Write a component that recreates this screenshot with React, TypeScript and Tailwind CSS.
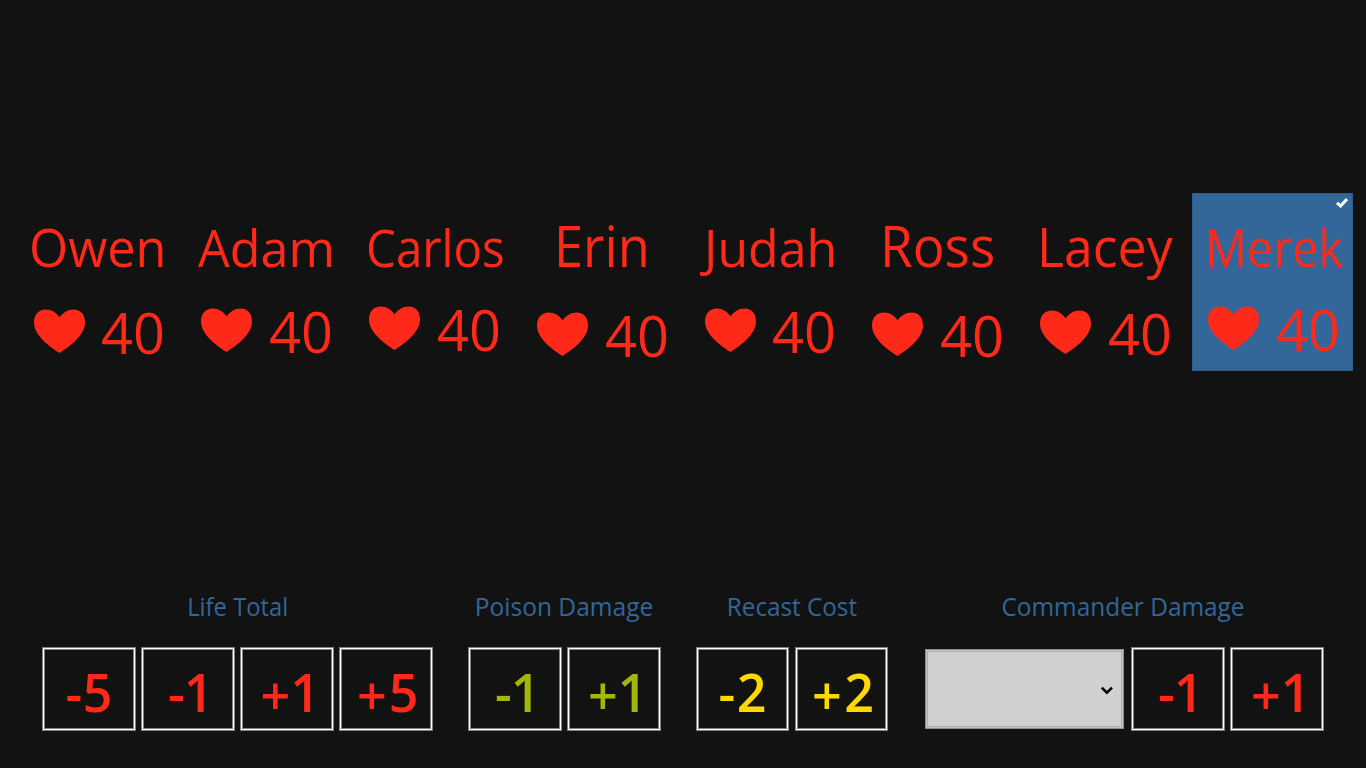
type Player = {
  name: string;
  life: number;
  nameClass: string;
  rowClass: string;
  selected?: boolean;
};

const players: Player[] = [
  { name: "Owen", life: 40, nameClass: "text-[53px] ml-[11.8px] scale-x-[0.951]", rowClass: "mt-[14px]" },
  { name: "Adam", life: 40, nameClass: "text-[52px] ml-[12.8px] scale-x-[0.966]", rowClass: "mt-[13px]" },
  { name: "Carlos", life: 40, nameClass: "text-[51px] ml-[12.4px] scale-x-[0.93]", rowClass: "mt-[11px]" },
  { name: "Erin", life: 40, nameClass: "text-[57.5px] ml-[32.6px] scale-x-[0.911]", rowClass: "mt-[17px]" },
  { name: "Judah", life: 40, nameClass: "text-[52px] ml-[15.2px] scale-x-[0.962]", rowClass: "mt-[13px]" },
  { name: "Ross", life: 40, nameClass: "text-[57.5px] ml-[23.1px] scale-x-[0.922]", rowClass: "mt-[17px]" },
  { name: "Lacey", life: 40, nameClass: "text-[54.6px] ml-[13px] scale-x-[0.948]", rowClass: "mt-[15px]" },
  { name: "Merek", life: 40, nameClass: "text-[50.4px] ml-[13.4px] scale-x-[0.926]", rowClass: "mt-[11px]", selected: true },
];

function Heart() {
  return (
    <svg viewBox="0 0 51 44" className="h-[44px] w-[51px] shrink-0 fill-[#ff291a]">
      <path d="M25.5 44 C15 37.5 0 26 0 13.5 C0 5.5 5 0.5 11.5 0.5 C18 0.5 22.5 4 25.6 8.2 C28.8 4 33.5 0.5 40 0.5 C46.5 0.5 51 5.5 51 13.5 C51 26 36 37.5 25.5 44 Z" />
    </svg>
  );
}

function PlayerTile({ player }: { player: Player }) {
  return (
    <div
      className={
        player.selected
          ? "relative h-[178px] w-[160.6px] shrink-0 bg-[#336699] shadow-[inset_0_0_0_1px_#2e5d8c]"
          : "relative h-[178px] w-[160.6px] shrink-0"
      }
    >
      <div className="h-[102px] text-[58px] leading-[104px] whitespace-nowrap">
        <span className={"inline-block origin-left leading-none " + player.nameClass}>{player.name}</span>
      </div>
      <div className={"flex h-[44px] items-end gap-[16.8px] pl-4 " + player.rowClass}>
        <Heart />
        <span className="relative top-px inline-block origin-left scale-x-[0.98] text-[57px] leading-[44px]">{player.life}</span>
      </div>
      {player.selected && (
        <svg viewBox="0 0 12 10" className="absolute top-[5px] right-[4.5px] h-[10px] w-[12px]" fill="none" stroke="#fff" strokeWidth="3">
          <path d="M1 4.8 L4.6 8 L11 1" />
        </svg>
      )}
    </div>
  );
}

type Action = { sign: string; digit: string; pad: string };

function ActionButton({ action, color }: { action: Action; color: string }) {
  return (
    <button
      className={
        "flex h-[84px] items-start border border-[#808080] text-[52px] font-semibold shadow-[inset_0_0_0_1px_#fff,inset_0_0_0_2px_#808080] " +
        (color === "text-[#ffd800]" ? "w-[93px] " : "w-[94px] ") +
        color
      }
    >
      <span className={"flex pt-[3px] leading-[82px] " + action.pad}>
        <span className={action.sign === "+" ? "relative top-[3px]" : "relative top-px"}>{action.sign}</span>
        <span>{action.digit}</span>
      </span>
    </button>
  );
}

function Group({
  title,
  titleClass,
  color,
  actions,
  select,
}: {
  title: string;
  titleClass: string;
  color: string;
  actions: Action[];
  select?: boolean;
}) {
  return (
    <section className="flex flex-col items-center">
      <h2 className={"h-[58px] text-[25.3px] leading-[34px] whitespace-nowrap text-[#336699] " + titleClass}>{title}</h2>
      <div className="flex">
        {select && (
          <div className="mt-[2px] mr-[7px] flex h-[80px] w-[199px] items-center justify-end border border-[#8e8e8e] bg-[#d0d0d0] pr-[10px] shadow-[inset_0_0_0_1px_#c2c2c2,inset_0_0_0_2px_#aeaeae]">
            <svg viewBox="0 0 12 9" className="mt-[3px] h-[9px] w-[12px]" fill="none" stroke="#000" strokeWidth="2.6">
              <path d="M0.8 1.6 L5.9 6.6 L11 1.6" />
            </svg>
          </div>
        )}
        <div className={color === "text-[#ffd800]" ? "flex gap-[6px]" : "flex gap-[5px]"}>
          {actions.map((a) => (
            <ActionButton key={a.sign + a.digit} action={a} color={color} />
          ))}
        </div>
      </div>
    </section>
  );
}

export default function App() {
  return (
    <main className="flex h-[768px] w-[1366px] flex-col overflow-hidden bg-[#121212] font-['Open_Sans','Noto_Sans',sans-serif] text-[#ff291a]">
      <div className="flex gap-[7.16px] pt-[193px] pl-[17.7px]">
        {players.map((p) => (
          <PlayerTile key={p.name} player={p} />
        ))}
      </div>
      <div className="mt-[218px] flex pl-[42px]">
        <Group
          title="Life Total"
          titleClass="scale-x-[0.941]"
          color="text-[#ff291a]"
          actions={[
            { sign: "-", digit: "5", pad: "pl-[22.5px] tracking-[0.5px]" },
            { sign: "-", digit: "1", pad: "pl-[26px] tracking-[-1px]" },
            { sign: "+", digit: "1", pad: "pl-[19.5px]" },
            { sign: "+", digit: "5", pad: "pl-[17px] tracking-[2px]" },
          ]}
        />
        <div className="w-[35px]" />
        <Group
          title="Poison Damage"
          titleClass="scale-x-[0.97]"
          color="text-[#a4b60a]"
          actions={[
            { sign: "-", digit: "1", pad: "pl-[26px] tracking-[-1px]" },
            { sign: "+", digit: "1", pad: "pl-[20px]" },
          ]}
        />
        <div className="w-[35px]" />
        <Group
          title="Recast Cost"
          titleClass="scale-x-[0.959]"
          color="text-[#ffd800]"
          actions={[
            { sign: "-", digit: "2", pad: "pl-[21.5px] tracking-[1.5px]" },
            { sign: "+", digit: "2", pad: "pl-[16px] tracking-[2.5px]" },
          ]}
        />
        <div className="w-[37px]" />
        <Group
          title="Commander Damage"
          titleClass="relative right-[1.5px] scale-x-[0.965]"
          color="text-[#ff291a]"
          select
          actions={[
            { sign: "-", digit: "1", pad: "pl-[26px] tracking-[-1px]" },
            { sign: "+", digit: "1", pad: "pl-[20px]" },
          ]}
        />
      </div>
    </main>
  );
}
